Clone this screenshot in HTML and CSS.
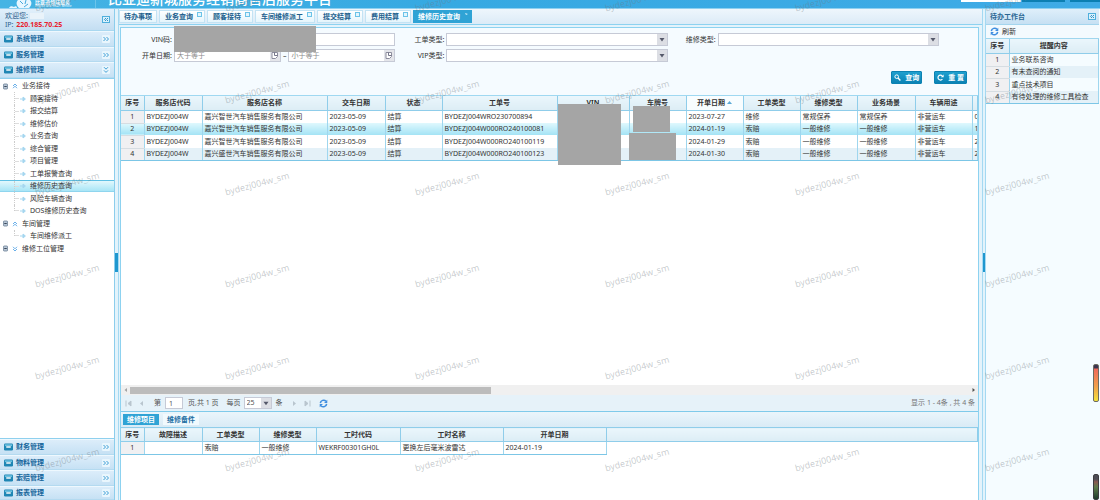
FILE: index.html
```html
<!DOCTYPE html>
<html lang="zh-CN">
<head>
<meta charset="utf-8">
<title>维修历史查询</title>
<link rel="stylesheet" href="styles.css">
</head>
<body>
<svg class="defs" width="0" height="0" aria-hidden="true">
  <symbol id="i-sys" viewBox="0 0 10 8"><rect x="0" y="0" width="10" height="8" rx="1.5" fill="#1f86b4"/><rect x="1" y="1" width="8" height="2" fill="#6cc0e0"/><rect x="2.5" y="3.2" width="5" height="1.6" fill="#fff"/></symbol>
  <symbol id="i-more" viewBox="0 0 8 8"><rect width="8" height="8" rx="1" fill="#e9f6fd"/><path d="M1.5 2l2 2-2 2M4.5 2l2 2-2 2" fill="none" stroke="#3f9fd6" stroke-width="1"/></symbol>
  <symbol id="i-down" viewBox="0 0 8 8"><rect width="8" height="8" rx="1" fill="#e9f6fd"/><path d="M2 1.2l2 2 2-2M2 4.4l2 2 2-2" fill="none" stroke="#3f9fd6" stroke-width="1"/></symbol>
  <symbol id="i-fold" viewBox="0 0 8 7"><rect x=".5" y=".5" width="7" height="6" fill="#d9f1fc" stroke="#4fafdc"/><path d="M4 2L2.5 3.5 4 5M6 2L4.5 3.5 6 5" fill="none" stroke="#2488c0" stroke-width=".9"/></symbol>
  <symbol id="i-box" viewBox="0 0 6 7"><rect x=".5" y=".5" width="5" height="6" rx="1" fill="#b9c8d8" stroke="#6f8296"/><path d="M1.5 3.5h3" stroke="#222f40"/></symbol>
  <symbol id="i-up" viewBox="0 0 6 6"><path d="M1 3l2-2 2 2M1 5.2l2-2 2 2" fill="none" stroke="#58a6e6" stroke-width=".9"/></symbol>
  <symbol id="i-dn" viewBox="0 0 6 6"><path d="M1 .8l2 2 2-2M1 3l2 2 2-2" fill="none" stroke="#58a6e6" stroke-width=".9"/></symbol>
  <symbol id="i-leaf" viewBox="0 0 6 6"><path d="M0 3h3M3 1l2.4 2L3 5z" fill="#a5d6ef" stroke="#a5d6ef" stroke-width="1"/></symbol>
  <symbol id="i-x" viewBox="0 0 5 5"><rect x=".5" y=".5" width="4" height="4" fill="#e2f5fd" stroke="#6cc3e8"/></symbol>
  <symbol id="i-cal" viewBox="0 0 10 11"><rect width="10" height="11" fill="#e4e5ea"/><path d="M2 2.5h5.5v4L5.5 8.5H2z" fill="#fff" stroke="#8c8c9c"/><path d="M4.5 2.5v3h3" fill="none" stroke="#77778a"/></symbol>
  <symbol id="i-sync" viewBox="0 0 10 10"><path d="M1.5 4.6A3.6 3.6 0 0 1 7.8 2.6M8.5 5.4A3.6 3.6 0 0 1 2.2 7.4" fill="none" stroke="#3f8ee0" stroke-width="1.7"/><path d="M9.2.8v3.6H5.6zM.8 9.2V5.6h3.6z" fill="#3f8ee0"/></symbol>
</svg>

<header class="top">
  <svg class="logo" viewBox="0 0 30 8" aria-hidden="true"><path d="M1 8c1-2 3-2 5-1 1-1 3-1 3 1zM10 0h12c2 2 2 5-1 8H11C8 5 8 2 10 0z" fill="#e8f7ff"/><path d="M12 1l3 3M18 0l-1 4M20 4l-4 3" stroke="#46a9dc"/></svg>
  <div class="brand"><b>比亚迪领域服务</b><small>English and Smart Service</small></div>
  <h1>比亚迪新城服务经销商售后服务平台</h1>
  <div class="top-tools"><i class="t-field"></i><i class="t-btn"></i><i class="t-btn t-last"></i></div>
</header>

<div class="shell">
  <aside class="side">
    <div class="user">
      <div><p>欢迎您:<span class="mask-name"></span></p><p>IP: <em>220.185.70.25</em></p></div>
      <svg width="8" height="7"><use href="#i-fold"/></svg>
    </div>
    <button class="acc"><svg width="9" height="8"><use href="#i-sys"/></svg><span>系统管理</span><svg width="8" height="8"><use href="#i-more"/></svg></button>
    <button class="acc"><svg width="9" height="8"><use href="#i-sys"/></svg><span>服务管理</span><svg width="8" height="8"><use href="#i-more"/></svg></button>
    <button class="acc"><svg width="9" height="8"><use href="#i-sys"/></svg><span>维修管理</span><svg width="8" height="8"><use href="#i-down"/></svg></button>
    <div class="tree-wrap">
      <ul class="tree">
        <li class="node"><svg width="5" height="7"><use href="#i-box"/></svg><svg width="6" height="6"><use href="#i-up"/></svg>业务接待</li>
        <li class="leaf"><svg width="6" height="6"><use href="#i-leaf"/></svg>顾客接待</li>
        <li class="leaf"><svg width="6" height="6"><use href="#i-leaf"/></svg>报交结算</li>
        <li class="leaf"><svg width="6" height="6"><use href="#i-leaf"/></svg>维修估价</li>
        <li class="leaf"><svg width="6" height="6"><use href="#i-leaf"/></svg>业务查询</li>
        <li class="leaf"><svg width="6" height="6"><use href="#i-leaf"/></svg>综合管理</li>
        <li class="leaf"><svg width="6" height="6"><use href="#i-leaf"/></svg>项目管理</li>
        <li class="leaf"><svg width="6" height="6"><use href="#i-leaf"/></svg>工单报警查询</li>
        <li class="leaf on"><svg width="6" height="6"><use href="#i-leaf"/></svg>维修历史查询</li>
        <li class="leaf"><svg width="6" height="6"><use href="#i-leaf"/></svg>风险车辆查询</li>
        <li class="leaf end"><svg width="6" height="6"><use href="#i-leaf"/></svg>DOS维修历史查询</li>
        <li class="node"><svg width="5" height="7"><use href="#i-box"/></svg><svg width="6" height="6"><use href="#i-up"/></svg>车间管理</li>
        <li class="leaf end"><svg width="6" height="6"><use href="#i-leaf"/></svg>车间维修派工</li>
        <li class="node"><svg width="5" height="7"><use href="#i-box"/></svg><svg width="6" height="6"><use href="#i-dn"/></svg>维修工位管理</li>
      </ul>
    </div>
    <button class="acc"><svg width="9" height="8"><use href="#i-sys"/></svg><span>财务管理</span><svg width="8" height="8"><use href="#i-more"/></svg></button>
    <button class="acc"><svg width="9" height="8"><use href="#i-sys"/></svg><span>物料管理</span><svg width="8" height="8"><use href="#i-more"/></svg></button>
    <button class="acc"><svg width="9" height="8"><use href="#i-sys"/></svg><span>索赔管理</span><svg width="8" height="8"><use href="#i-more"/></svg></button>
    <button class="acc"><svg width="9" height="8"><use href="#i-sys"/></svg><span>报表管理</span><svg width="8" height="8"><use href="#i-more"/></svg></button>
  </aside>

  <div class="split"><i></i></div>

  <main class="main">
    <nav class="tabs">
      <button class="tab first">待办事项</button>
      <button class="tab">业务查询<svg width="5" height="5"><use href="#i-x"/></svg></button>
      <button class="tab">顾客接待<svg width="5" height="5"><use href="#i-x"/></svg></button>
      <button class="tab">车间维修派工<svg width="5" height="5"><use href="#i-x"/></svg></button>
      <button class="tab">提交结算<svg width="5" height="5"><use href="#i-x"/></svg></button>
      <button class="tab">费用结算<svg width="5" height="5"><use href="#i-x"/></svg></button>
      <button class="tab on">维修历史查询<svg width="5" height="5"><path d="M1 1l3 1-2 1z" fill="#cfeefb"/></svg></button>
    </nav>

    <div class="content">
      <form class="query">
        <div class="fields">
          <label for="vin">VIN码:</label><input id="vin" type="text">
          <label for="otype">工单类型:</label><select id="otype"><option></option></select>
          <label for="rtype">维修类型:</label><select id="rtype"><option></option></select>
          <span></span>
          <label for="d1">开单日期:</label>
          <div class="range">
            <div class="date"><input id="d1" type="text" placeholder="大于等于"><svg width="10" height="11"><use href="#i-cal"/></svg></div>
            <span>–</span>
            <div class="date"><input type="text" aria-label="结束日期" placeholder="小于等于"><svg width="10" height="11"><use href="#i-cal"/></svg></div>
          </div>
          <label for="vip">VIP类型:</label><select id="vip"><option></option></select>
        </div>
        <div class="actions">
          <button type="button"><svg width="7" height="7" viewBox="0 0 7 7"><circle cx="2.7" cy="2.7" r="1.8" fill="none" stroke="#fff"/><path d="M4 4l2.4 2.4" stroke="#fff" stroke-width="1.4"/></svg>查询</button>
          <button type="button"><svg width="7" height="7" viewBox="0 0 7 7"><path d="M5.4 5.2A2.5 2.5 0 1 1 5.2 1.7" fill="none" stroke="#fff" stroke-width="1.2"/><path d="M6.6.4v2.8H3.8z" fill="#fff"/></svg>重 置</button>
        </div>
      </form>

      <section class="list">
        <div class="list-body">
          <table class="grid">
            <colgroup><col class="w23"><col class="w58"><col class="w125"><col class="w58"><col class="w57"><col class="w115"><col class="w72"><col class="w57"><col class="w57"><col class="w57"><col class="w57"><col class="w58"><col class="w57"><col></colgroup>
            <thead><tr><th>序号</th><th>服务店代码</th><th>服务店名称</th><th>交车日期</th><th>状态</th><th>工单号</th><th>VIN</th><th>车牌号</th><th class="sorted">开单日期 <svg width="5" height="3"><path d="M0 3l2.5-3L5 3z" fill="#5aa9d6"/></svg></th><th>工单类型</th><th>维修类型</th><th>业务场景</th><th>车辆用途</th><th></th></tr></thead>
            <tbody>
              <tr><th>1</th><td>BYDEZJ004W</td><td>嘉兴智世汽车销售服务有限公司</td><td>2023-05-09</td><td>结算</td><td>BYDEZJ004WRO230700894</td><td></td><td></td><td>2023-07-27</td><td>维修</td><td>常规保养</td><td>常规保养</td><td>非营运车</td><td>0</td></tr>
              <tr class="sel"><th>2</th><td>BYDEZJ004W</td><td>嘉兴智世汽车销售服务有限公司</td><td>2023-05-09</td><td>结算</td><td>BYDEZJ004W000RO240100081</td><td></td><td></td><td>2024-01-19</td><td>索赔</td><td>一般维修</td><td>一般维修</td><td>非营运车</td><td>1</td></tr>
              <tr><th>3</th><td>BYDEZJ004W</td><td>嘉兴智世汽车销售服务有限公司</td><td>2023-05-09</td><td>结算</td><td>BYDEZJ004W000RO240100119</td><td></td><td></td><td>2024-01-29</td><td>索赔</td><td>一般维修</td><td>一般维修</td><td>非营运车</td><td>2</td></tr>
              <tr class="alt"><th>4</th><td>BYDEZJ004W</td><td>嘉兴盛世汽车销售服务有限公司</td><td>2023-05-09</td><td>结算</td><td>BYDEZJ004W000RO240100123</td><td></td><td></td><td>2024-01-30</td><td>索赔</td><td>一般维修</td><td>一般维修</td><td>非营运车</td><td>2</td></tr>
            </tbody>
          </table>
        </div>
        <div class="hscroll"><svg width="9" height="8" viewBox="0 0 9 8"><path d="M6 2v4L3.5 4z" fill="#a3a3a3"/></svg><div class="track"><i></i></div><svg width="9" height="8" viewBox="0 0 9 8"><path d="M3.5 2v4L6 4z" fill="#505050"/></svg></div>
        <div class="pager">
          <svg width="7" height="7" viewBox="0 0 7 7"><path d="M1 .5v6M6 1L3 3.5 6 6z" fill="#b9c5ce" stroke="#b9c5ce"/></svg>
          <svg class="prev" width="5" height="7" viewBox="0 0 5 7"><path d="M4 1L1 3.5 4 6z" fill="#b9c5ce"/></svg>
          <label for="pg">第</label><input id="pg" type="text" value="1"><span class="total">页,共 1 页</span>
          <label for="ps">每页</label><select id="ps"><option>25</option></select><span class="unit">条</span>
          <svg class="next" width="5" height="7" viewBox="0 0 5 7"><path d="M1 1l3 2.5L1 6z" fill="#b9c5ce"/></svg>
          <svg class="last" width="7" height="7" viewBox="0 0 7 7"><path d="M6 .5v6M1 1l3 2.5L1 6z" fill="#b9c5ce" stroke="#b9c5ce"/></svg>
          <svg width="9" height="9" viewBox="0 0 10 10"><use href="#i-sync"/></svg>
          <span class="count">显示 1 - 4条 , 共 4 条</span>
        </div>
      </section>

      <section class="detail">
        <nav class="subtabs"><button class="on">维修项目</button><button>维修备件</button></nav>
        <table class="grid sub">
          <colgroup><col class="w23"><col class="w58"><col class="w57"><col class="w57"><col class="w84"><col class="w103"><col class="w103"><col></colgroup>
          <thead><tr><th>序号</th><th>故障描述</th><th>工单类型</th><th>维修类型</th><th>工时代码</th><th>工时名称</th><th>开单日期</th><th></th></tr></thead>
          <tbody><tr><th>1</th><td></td><td>索赔</td><td>一般维修</td><td>WEKRF00301GH0L</td><td>更换左后毫米波雷达</td><td>2024-01-19</td><td class="blank"></td></tr></tbody>
        </table>
      </section>
    </div>
    <i class="mask m1"></i><i class="mask m2"></i><i class="mask m3"></i><i class="mask m4"></i>
  </main>

  <div class="split right"><i></i></div>

  <aside class="desk">
    <div class="desk-head"><b>待办工作台</b><svg width="8" height="7"><use href="#i-fold"/></svg></div>
    <button class="refresh"><svg width="9" height="9" viewBox="0 0 10 10"><use href="#i-sync"/></svg>刷新</button>
    <table class="grid">
      <colgroup><col class="w23"><col></colgroup>
      <thead><tr><th>序号</th><th>提醒内容</th></tr></thead>
      <tbody>
        <tr><th>1</th><td>业务联系咨询</td></tr>
        <tr class="alt"><th>2</th><td>有未查阅的通知</td></tr>
        <tr><th>3</th><td>重点技术项目</td></tr>
        <tr class="alt"><th>4</th><td>有待处理的维修工具检查</td></tr>
      </tbody>
    </table>
    <i class="gauge"></i><i class="gauge dark"></i>
  </aside>
</div>

<div class="marks" aria-hidden="true"></div>
<script src="marks.js"></script>
</body>
</html>
```
FILE: styles.css
```css
* { box-sizing: border-box; }
body, p, h1, ul { margin: 0; padding: 0; }
body {
  height: 100vh; display: flex; flex-direction: column; overflow: hidden; position: relative;
  font: 7px/10px "Noto Sans", "Noto Sans CJK SC", sans-serif; color: #333; background: #dff1fb;
}
button, input, select { font: inherit; color: inherit; margin: 0; padding: 0; border: 0; border-radius: 0; background: none; }
svg { flex: none; display: block; }
i { font-style: normal; }
.defs { position: absolute; }

.top { height: 9px; flex: none; display: flex; overflow: hidden; background: linear-gradient(90deg, #45b4e4, #36a9e2 40%, #3fabe6); color: #fff; border-bottom: 1px solid #8fd0f0; }
.logo { width: 30px; height: 8px; margin-left: 8px; flex: none; }
.brand { width: 61px; border-right: 1px solid #6cc4ea; margin-left: -3px; white-space: nowrap; overflow: hidden; }
.brand b, .brand small { display: block; }
.brand b { font-size: 5px; line-height: 5px; height: 5px; }
.brand small { font-size: 3px; line-height: 3px; }
h1 { font-size: 14px; line-height: 14px; margin: -8px 0 0 12px; height: 16px; white-space: nowrap; font-weight: 500; }
.top-tools { margin-left: auto; display: flex; height: 2px; gap: 1px; }
.t-field { width: 60px; background: #fff; }
.t-btn { width: 43px; background: #0c7fb2; }
.t-last { width: 30px; margin-left: 4px; }

.shell { flex: 1; min-height: 0; display: flex; }
.side { width: 115px; flex: none; display: flex; flex-direction: column; border-right: 1px solid #8ccdec; background: #fff; overflow: hidden; }
.user { height: 22px; flex: none; display: flex; justify-content: space-between; align-items: center; padding: 0 4px 0 5px; background: linear-gradient(#e2f0fb, #c3def2); color: #2e5f8c; border-bottom: 1px solid #a9d8f0; }
.user p { line-height: 9px; }
.user em { font-style: normal; font-weight: bold; color: #e8202c; margin-left: 1px; }
.mask-name { display: inline-block; width: 14px; height: 6px; margin-left: 2px; background: #e9f3fa; vertical-align: middle; }
.acc { flex: 0 0 auto; height: 16px; width: 100%; display: flex; align-items: center; gap: 3px; padding: 0 4px; background: linear-gradient(#dcedfa, #c6e1f4); border-top: 1px solid #eef8fe; border-bottom: 1px solid #b4daf0; color: #17679c; font-weight: bold; text-align: left; }
.acc span { flex: 1; }
.acc:nth-child(3), .acc:nth-last-child(3) { height: 15px; }
.tree-wrap { flex: 1; min-height: 0; padding-top: 1px; border-top: 1px solid #8fd0ee; border-bottom: 1px solid #8fd0ee; }
.tree-wrap ~ .acc:last-child { height: 14px; }
.tree { list-style: none; display: grid; grid-template-rows: repeat(7, 12px 13px); }
.tree li { display: flex; align-items: center; white-space: nowrap; position: relative; }
.node { gap: 4px; padding-left: 3px; }
.leaf { padding-left: 20px; gap: 4px; }
.leaf::before { content: ""; position: absolute; left: 14px; top: 0; bottom: 0; width: 4px; border-left: 1px dotted #ccc; background: linear-gradient(#ddd, #ddd) 0 50% / 4px 1px no-repeat; }
.leaf.end::before { bottom: 50%; background-position: 0 100%; }
.tree .on { background: linear-gradient(#e2f8fd, #a8e5f6); border-top: 1px solid #5fc0e4; border-bottom: 1px solid #8fd5ee; }

.split { width: 4px; flex: none; display: flex; align-items: center; background: #e3f3fb; border-right: 1px solid #a4d9f2; }
.split i { width: 3px; height: 19px; margin-top: 16px; background: #1f97cf; }
.split.right { border-left: 1px solid #a4d9f2; }

.main { flex: 1; min-width: 0; display: flex; flex-direction: column; position: relative; background: #e4f3fb; }
.tabs { height: 16px; flex: none; display: flex; align-items: center; gap: 2px; background: linear-gradient(#eef6fc, #dcebf7); border-bottom: 1px solid #8dd2f0; }
.tab { height: 13px; padding: 0 2px 0 5px; display: flex; align-items: center; gap: 4px; color: #215f8d; font-weight: bold; background: linear-gradient(#fff, #e5f5fc); border: 1px solid #c3e3f4; white-space: nowrap; }
.tab svg { margin-top: -4px; }
.tab.first { padding: 0 4px; }
.tab.on { background: #2fa3d5; color: #fff; border-color: #2fa3d5; padding-left: 4px; }

.content { flex: 1; min-height: 0; display: flex; flex-direction: column; margin: 2px 3px 0 1px; border: 1px solid #8dd2f0; border-bottom: 0; background: #fff; }
.query { height: 68px; flex: none; display: flex; flex-direction: column; justify-content: space-between; padding: 5px 0 11px; background: #f5fbff; border-bottom: 1px solid #9fd8f1; }
.fields { display: grid; grid-template-columns: 51px 1fr 47px 1fr 46px 1fr 37px; gap: 3px 2px; }
.fields label { text-align: right; line-height: 13px; }
.fields input, .fields select { width: 100%; height: 13px; background-color: #fff; border: 1px solid #c6cad6; min-width: 0; padding-left: 2px; }
.fields input::placeholder { color: #8a8a8a; opacity: 1; }
select { appearance: none; }
.fields select, .pager select {
  background: url("data:image/svg+xml,%3Csvg xmlns='http://www.w3.org/2000/svg' width='10' height='11'%3E%3Crect width='10' height='11' fill='%23dcdee4'/%3E%3Cpath d='M2.5 4h5L5 7.5z' fill='%2355596a'/%3E%3C/svg%3E") right center no-repeat #fff;
}
.range { display: flex; align-items: center; gap: 2px; }
.date { flex: 1; min-width: 0; display: flex; border: 1px solid #c6cad6; background: #fff; }
.fields .date input { border: 0; height: 11px; flex: 1; }
.actions { display: flex; justify-content: flex-end; gap: 12px; padding-right: 11px; }
.actions button { height: 13px; display: flex; align-items: center; gap: 4px; padding: 0 2px; border: 1px solid #0c82b2; border-radius: 1px; background: linear-gradient(#1fa0cf, #0b82b4); color: #fff; font-weight: bold; }

.list { flex: 1; min-height: 0; display: flex; flex-direction: column; }
.list-body { flex: 1; min-height: 0; overflow: hidden; }
.grid { width: 100%; table-layout: fixed; border-collapse: collapse; }
.grid th, .grid td { padding: 0 2px; height: 12px; line-height: 10px; white-space: nowrap; overflow: hidden; text-align: left; font-weight: normal; }
.grid th { text-align: center; padding: 0; }
.grid thead th { height: 14px; font-weight: bold; background: linear-gradient(#eaf6fc, #dcedf5); border: 1px solid #8fcdea; border-width: 0 1px 1px 0; }
.grid thead .sorted { background: #f8fdff; }
.sorted svg { display: inline-block; vertical-align: 1px; }
.grid tbody tr:nth-child(odd) > * { height: 13px; }
.grid td { border-right: 1px solid #9fd6ee; }
.grid tbody th { background: #f0f0f2; border-right: 1px solid #9fd6ee; border-bottom: 1px solid #d6dde2; }
.grid tbody tr:last-child > * { border-bottom: 1px solid #7cc6e6; }
.grid .alt td { background: #e4f1f8; }
.grid .sel > * { background: linear-gradient(#dff8fd, #a3e3f5); }
.grid.sub thead th { border-top-width: 1px; }
.grid tbody tr:last-child > .blank { border: 0; }
.w23 { width: 23px; } .w57 { width: 57px; } .w58 { width: 58px; } .w72 { width: 72px; }
.w84 { width: 84px; } .w103 { width: 103px; } .w115 { width: 115px; } .w125 { width: 125px; }

.hscroll { height: 10px; flex: none; display: flex; align-items: center; background: #f0f0f0; }
.track { flex: 1; }
.track i { display: block; width: 43%; height: 7px; background: #bcbcbc; }
.pager { height: 17px; flex: none; display: flex; align-items: center; padding: 0 3px 0 4px; background: #e6f2f9; border-bottom: 1px solid #7fcaea; color: #555; }
.pager .prev { margin: 0 10px 0 7px; }
.pager input { width: 18px; height: 12px; margin: 0 5px 0 4px; padding-left: 3px; border: 1px solid #c6cad6; background: #fff; }
.total { margin-right: 8px; }
.pager select { width: 28px; height: 12px; margin: 0 4px 0 3px; padding-left: 2px; border: 1px solid #c6cad6; }
.next { margin-left: 9px; }
.last { margin: 0 8px 0 7px; }
.count { margin-left: auto; color: #777; }

.detail { height: 88px; flex: none; }
.subtabs { height: 15px; display: flex; align-items: flex-end; gap: 4px; padding: 0 2px 2px; background: linear-gradient(#eaf5fb, #d9ebf6); }
.subtabs button { height: 11px; padding: 0 4px; font-weight: bold; color: #1d6ea3; background: #f1fafe; line-height: 10px; }
.subtabs .on { background: #2fa3d5; color: #fff; }

.mask { position: absolute; background: #a5a5a5; }
.m1 { left: 55px; top: 17px; width: 142px; height: 26px; }
.m2 { left: 439px; top: 95px; width: 63px; height: 61px; }
.m3 { left: 514px; top: 97px; width: 37px; height: 26px; }
.m4 { left: 510px; top: 124px; width: 47px; height: 27px; }

.desk { width: 114px; flex: none; position: relative; padding-right: 1px; background: #f5fcff; }
.desk-head { height: 16px; display: flex; align-items: center; justify-content: space-between; padding: 0 3px 0 4px; background: linear-gradient(#dfeffa, #c6e0f3); border-bottom: 1px solid #a4d5ee; color: #2b6794; }
.refresh { width: 100%; height: 14px; display: flex; align-items: center; gap: 3px; padding: 0 4px; background: #f3fafe; border-bottom: 1px solid #9fd6ee; }
.gauge { position: absolute; right: 1px; top: 355px; width: 6px; height: 38px; border: 1px solid #6b6b62; border-radius: 2px; background: linear-gradient(#3b3550 3px, #f0695a 4px, #f2a04a 60%, #f4e23c); }
.gauge.dark { top: auto; bottom: 0; height: 26px; background: linear-gradient(#4c4c55 4px, #8a5a50 7px, #5f7d4a 50%, #1d3b2c); border-color: #3c3c40; }

.marks { position: absolute; inset: 0; overflow: hidden; pointer-events: none; display: grid; grid-template-columns: repeat(6, 190px); grid-auto-rows: 92px; margin: -46px 0 0 -28px; }
.marks span { place-self: center; font-size: 9px; line-height: 12px; color: rgba(110, 120, 130, .38); transform: rotate(-15deg); }
```
FILE: marks.js
```js
const marks = document.querySelector('.marks');
for (let n = 0; n < 36; n++) {
  const mark = document.createElement('span');
  mark.textContent = 'bydezj004w_sm';
  marks.append(mark);
}
```
